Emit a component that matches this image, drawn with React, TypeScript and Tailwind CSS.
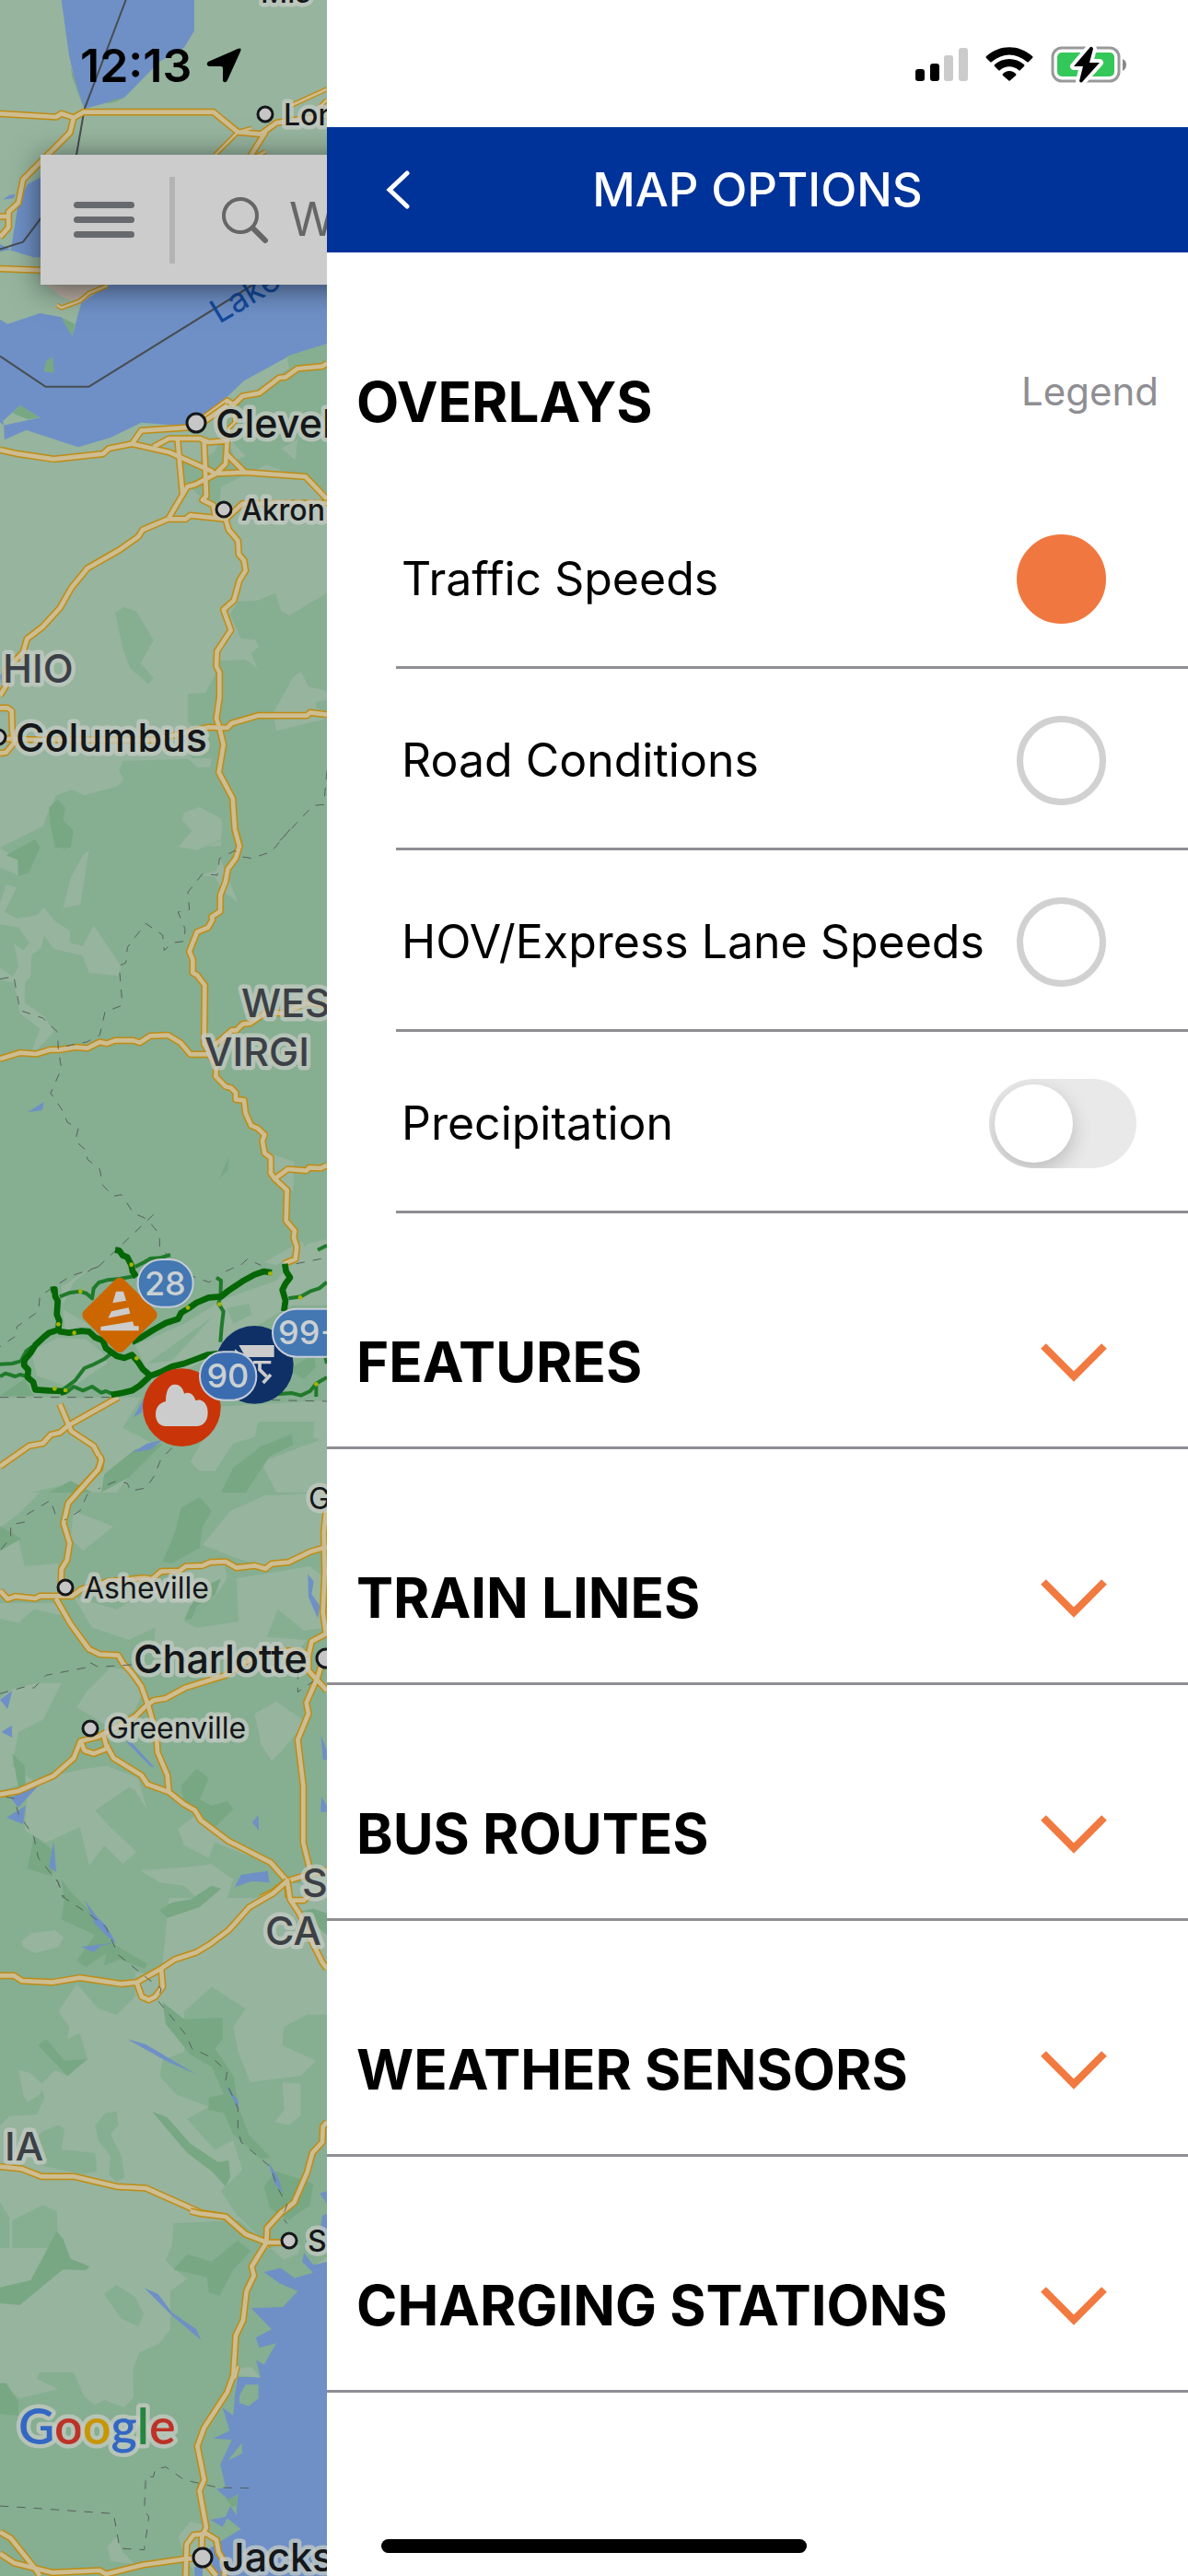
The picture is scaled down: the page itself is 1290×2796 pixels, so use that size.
import { useState } from 'react';

type Fill = 'light' | 'dark' | 'deep' | 'water' | 'sand';

interface Tile {
  y: number;
  fills: [Fill, string][];
  roads: string[];
  thinRoads?: string[];
  dashed?: string[];
  solid?: string[];
}

const FILL_COLORS: Record<Fill, string> = {
  light: '#96b49e',
  dark: '#86ae91',
  deep: '#77a783',
  water: '#6e90c6',
  sand: '#b9ada3',
};

// Path data is drawn at 3x, each tile is placed at its own y
const TILES: Tile[] = [
  {
    y: 0,
    fills: [
      ['water', 'M200 0L633 0L633 100L600 155L520 200L405 318L275 355L250 290L225 180Z'],
      ['deep', 'M230 215L275 355L255 300L235 250Z'],
      ['deep', 'M345 338L370 325L405 318L380 330Z'],
      ['water', 'M130 578L90 600L60 660L35 815L110 838L160 838L160 578Z'],
      ['water', 'M10 650L30 635L50 632L45 645Z'],
      ['water', 'M0 795L35 812L0 820Z'],
      ['water', 'M0 1040L25 1055L130 1020L200 1033L235 1095L265 985L350 930L500 900L1065 900L1065 1120L950 1155L795 1240L700 1330L640 1390L460 1376L360 1425L255 1456L85 1400L15 1432L12 1385L0 1375Z'],
      ['sand', 'M150 928L350 928L265 985L210 972Z'],
      ['deep', 'M200 1033L235 1095L243 1055Z'],
      ['light', 'M10 1370L65 1320L130 1360L12 1385Z'],
      ['deep', 'M40 1345L65 1320L130 1360L90 1365Z'],
      ['deep', 'M143 1210L150 1175L172 1162L176 1214Z'],
      ['dark', 'M1065 1120L990 1142L935 1160L942 1200L840 1265L740 1330L740 1440L1065 1440Z'],
    ],
    roads: [
      'M0 370L183 381L200 370L240 383L272 365L695 365L775 430L850 437L900 400L1065 375',
      'M240 383L228 432L75 585L60 660L28 690L28 740L0 772',
      'M0 705L28 705',
      'M0 875L140 880',
      'M865 430L815 510',
      'M640 1378L740 1305L760 1318L790 1290L845 1280L910 1230L930 1228L970 1200L1050 1193L1065 1183',
    ],
    thinRoads: [
      'M700 505L775 430L820 418',
      'M945 345L1065 290',
      'M1065 325L1040 350',
      'M350 930L290 955L260 980L200 1002L185 993',
      'M835 510L865 493',
      'M760 1340L765 1375L745 1395L750 1420',
    ],
    solid: [
      'M410 0L275 355L248 510',
      'M135 708L75 788L0 812',
      'M0 1160L148 1259L290 1259L860 905',
    ],
  },
  {
    y: 440,
    fills: [
      ['dark', 'M740 60L1065 60L1065 310L995 300L970 230L870 195L720 265L715 330L690 330L600 250L590 180L640 190L700 150Z'],
      ['light', 'M740 100L800 165L765 180Z'],
      ['light', 'M915 140L970 110L962 178Z'],
      ['light', 'M720 265L870 192L910 215L990 235L1065 305L1065 330L715 330Z'],
      ['dark', 'M750 680L785 760L830 762L843 785L818 808L840 858L800 828L710 832L700 880L670 935L612 940L612 1030L640 1060L600 1090L620 1140L640 1178L685 1178L670 1150L400 1158L388 1190L403 1217L385 1240L275 1270L235 1252L183 1270L155 1330L140 1370L0 1440L1065 1440L1065 612L942 684L915 668L897 612L840 635L775 638Z'],
      ['light', 'M612 1150L690 1150L685 1178L640 1178Z'],
      ['light', 'M955 885L980 865L1005 915L1065 930L1065 960L1030 965L1030 985L1065 1000L1065 1020L900 1060L890 1000Z'],
      ['light', 'M600 1325L650 1308L720 1345L725 1370L720 1415L640 1446L580 1438L625 1385L592 1350Z'],
      ['deep', 'M160 1310L188 1283L212 1310L205 1350L238 1385L230 1440L180 1440L165 1370Z'],
      ['dark', 'M375 675L403 657L443 670L500 765L458 840L500 888L483 907L423 855L400 790Z'],
      ['water', 'M0 880L8 870L5 910Z'],
    ],
    roads: [
      'M0 145L60 158L175 175L335 158L355 140L430 125L460 82L640 70L740 0',
      'M430 125L550 152L690 215L700 228',
      'M500 135L550 108L650 108L680 120L740 115L735 190L700 225L635 258L610 265L595 290L548 370L465 405L450 428L390 470L285 530L232 595L195 660L138 722L88 760L75 805L20 860L18 915L0 945',
      'M578 108L595 290',
      'M665 115L672 295L660 308L695 325L700 355L735 370',
      'M735 155L795 215',
      'M700 222L800 218L995 232L1065 305',
      'M548 370L605 370L620 358L735 370L790 320L1065 318',
      'M735 370L745 405L775 440L778 485L795 505L800 538L780 570L762 635L728 665L752 732L707 800L705 850L715 870L715 950L705 1020L715 1050L728 1105L713 1195L758 1280L765 1380L782 1440',
      'M0 1085L90 1088L500 1090L680 1048L740 1050L755 1035L840 1010L1000 1010L1010 1000L1065 1007',
      'M0 985L25 985L38 995L40 1060L45 1100L20 1130L0 1133',
    ],
    dashed: ['M1065 1190L1055 1300L1020 1303L905 1425'],
  },
  {
    y: 900,
    fills: [
      ['dark', 'M0 60H1065V1440H0Z'],
      ['light', 'M580 58L640 68L718 38L722 55Z'],
      ['light', 'M0 60L58 100L60 150L0 125Z'],
      ['light', 'M205 257L230 160L270 85L290 68L262 245Z'],
      ['light', 'M15 270L55 190L20 180L0 240L0 310L60 320L95 370L75 395L45 370L60 450L40 480L0 450L0 490L45 500L65 600L130 650L105 715L120 720L175 660L145 610L80 565L82 500L100 480L103 410L135 385L143 345L175 390L268 412L290 468L385 478L395 445L305 313L270 380L228 370L228 330L180 300L143 255L120 280L55 290Z'],
      ['deep', 'M20 85L115 33L130 60L95 140L60 153L58 100Z'],
      ['deep', 'M178 0L238 0L232 50L208 65L178 30Z'],
      ['light', 'M655 150L705 135L715 90L775 238L725 200L700 155Z'],
      ['water', 'M90 922L143 888L138 915Z'],
      ['light', 'M885 1058L960 1083L955 1180L900 1140Z'],
      ['deep', 'M745 1068L742 1110L715 1138Z'],
      ['light', 'M985 1340L995 1370L900 1420L860 1410Z'],
    ],
    roads: [
      'M0 748L65 728L118 732L165 718L195 718L245 710L285 713L325 693L348 698L375 688L435 688L455 695L490 673L548 671L588 695L620 733L680 733L705 770L703 805L735 838L752 842L768 858L768 880L795 883L800 925L818 965L838 973L862 995L855 1015L862 1055L882 1070L882 1120L895 1138L935 1175L932 1275L960 1308L957 1330L967 1360L962 1400L925 1415',
      'M765 0L780 55L768 95L742 130L735 170L718 215L717 268L690 285L692 295L678 320L642 335L617 398L628 425L628 468L642 475L667 508L665 700L690 740',
      'M680 715L715 690L755 655L770 655L790 635L815 632L870 595L920 600L995 567L1065 570',
      'M895 1138L938 1107L998 1112L1008 1102L1045 1104L1065 1095',
    ],
    dashed: [
      'M945 0L885 73L820 95L790 90L765 70L715 95L708 150L660 145L612 205L617 262L580 270L603 325L600 365L560 370L535 395L530 345L475 307L445 345L415 385L410 435L388 445L397 550L395 575L342 595L325 670L285 692L190 712',
      'M0 488L45 480L65 590L140 615L187 660L190 715L200 780L165 860L200 910L220 955L255 975L245 1015L280 1045L285 1075L325 1107L335 1160L370 1195L395 1190L435 1250L480 1270L520 1320L520 1360L545 1385',
      'M500 1255L400 1350L320 1425L285 1440',
    ],
  },
  {
    y: 1320,
    fills: [
      ['dark', 'M0 170H1065V900H0Z'],
      ['light', 'M100 440L190 395L280 400L340 450L350 480L230 560L120 520Z'],
      ['light', 'M440 420L600 350L730 270L900 210L1000 90L1065 75L1065 290L950 290L850 350L720 440L500 560L480 500Z'],
      ['light', 'M200 230L320 150L240 215L200 300L300 360L210 370Z'],
      ['light', 'M0 590L460 590L400 690L500 740L380 900L300 900L230 870L100 900L0 900Z'],
      ['light', 'M720 620L1065 600L1065 740L1020 720L1025 670L840 670L830 720L760 740L700 830L650 830L620 800Z'],
      ['light', 'M850 800L1065 720L1065 900L900 900Z'],
      ['dark', 'M480 480L690 330L560 470Z'],
      ['dark', 'M740 300L810 285L820 320L760 350Z'],
      ['deep', 'M720 900L760 820L850 750L950 710L955 745L880 780L800 900Z'],
      ['deep', 'M330 900L340 840L440 760L530 740L420 850Z'],
      ['deep', 'M160 900L230 862L300 900Z'],
      ['deep', 'M0 585L80 530L110 585Z'],
      ['deep', 'M940 500L1020 450L1030 490L990 530Z'],
      ['water', 'M435 655L470 590L462 640Z'],
      ['water', 'M430 770L480 740L530 728L490 760Z'],
    ],
    roads: [
      'M0 815L95 748L140 740L165 712L195 705L225 680L385 590',
      'M195 612L232 700L305 748L330 795L325 822L250 900',
    ],
    dashed: [
      'M0 590L360 590M720 595L1065 603',
      'M320 165L230 195L130 260L125 310L55 360L52 390L0 425',
      'M735 180L790 155L805 140L850 160M965 155L1065 135',
      'M610 190L680 215L710 200',
      'M560 755L525 790L500 850L475 885L425 895L415 870L380 862L320 888',
    ],
  },
  {
    y: 1580,
    fills: [
      ['dark', 'M0 120H1065V1440H0Z'],
      ['light', 'M0 120H130L60 190L0 235Z'],
      ['light', 'M240 180L370 230L270 310L230 270Z'],
      ['light', 'M660 290L750 180L860 130L1065 120L1065 300L1000 320L930 350L850 360L760 330Z'],
      ['light', 'M0 310L60 270L80 360L190 350L190 450L120 455L20 465L0 430Z'],
      ['light', 'M240 460L380 500L500 430L600 370L730 350L740 400L700 460L640 480L600 540L640 560L780 540L870 590L1000 600L970 640L500 640L505 560L420 600L300 560Z'],
      ['light', 'M0 480L190 480L200 520L110 500L60 545L0 530Z'],
      ['light', 'M770 400L1010 360L1060 400L1060 560L990 570L905 500L850 640L780 600Z'],
      ['light', 'M360 690L430 700L460 780L440 830L350 880L250 820L280 770Z'],
      ['light', 'M0 790L40 760L120 740L200 740L140 860L60 900L40 1010L110 1060L0 1090Z'],
      ['light', 'M270 1020L350 1010L450 1050L480 1155L440 1090L420 1080L310 1155L360 1210L445 1290L400 1330L340 1270L290 1335L260 1210L150 1260L80 1220L90 1080L180 1040Z'],
      ['light', 'M830 840L900 800L1000 870L960 910L910 970L885 995L850 940Z'],
      ['light', 'M580 1215L650 1160L740 1250L880 1310L800 1300L700 1260L680 1310L600 1270Z'],
      ['light', 'M455 1350L600 1340L690 1330L760 1380L740 1440L640 1440L600 1400L520 1390Z'],
      ['light', 'M880 1440L930 1390L1065 1400L1065 1440Z'],
      ['deep', 'M530 345L570 250L590 170L650 135L690 180L660 230L650 300L560 350Z'],
      ['deep', 'M0 230L70 270L0 310Z'],
      ['deep', 'M600 535L620 490L680 420L720 400L700 455L640 490L625 530Z'],
      ['deep', 'M590 1075L640 1020L680 1050L650 1120L690 1140L740 1125L760 1150L700 1210L640 1180L600 1130Z'],
      ['deep', 'M40 970L80 1010L85 1100L60 1080Z'],
      ['deep', 'M110 1240L180 1290L170 1370L90 1345Z'],
      ['water', 'M0 795L40 765L25 825Z'],
      ['water', 'M5 900L38 878L40 918Z'],
      ['water', 'M35 1115L60 1100L125 1075L60 1145Z'],
      ['water', 'M22 1178L83 1140L75 1200Z'],
      ['water', 'M175 1255L183 1355L160 1340Z'],
      ['water', 'M1003 385L1022 410L1015 450L1042 490L1035 530L1005 460Z'],
      ['water', 'M765 1405L785 1365L872 1352L878 1390L820 1385Z'],
      ['water', 'M822 1193L842 1170L843 1222Z'],
      ['water', 'M1045 910L1065 960V990H1052Z'],
      ['water', 'M1047 1110L1065 1140V1160H1045Z'],
      ['water', 'M410 930L430 935L503 1015L490 1012Z'],
    ],
    roads: [
      'M325 0L330 15L320 45L222 155L207 220L227 285L218 340L200 370L198 455',
      'M0 440L25 467L50 458L115 465L130 457L235 457L265 435L350 410L470 398L495 402L525 377L585 375L605 360L660 358L685 347L735 345L770 365L830 358L865 368L885 352L940 347L1010 313L1065 297',
      'M182 465L230 548L290 630L325 647L385 650L400 675L430 708L460 750L485 820L510 910L513 965L545 1040L550 1095',
      'M0 1103L60 1092L175 1042L240 985L262 930L320 915L440 850L470 820L500 797L540 790L605 755L735 715L850 640L960 635L1000 645',
      'M265 935L275 960L305 970L345 955L350 940',
      'M335 900L345 940L370 985L460 1040L480 1070L550 1095L600 1135L635 1155L655 1188L745 1255L882 1325L935 1385L1000 1365L1065 1350',
      'M1062 180L1055 250L1058 380L1052 510L1062 580L1015 605L1005 650L1005 700L1065 765',
      'M1060 640L1035 720L998 805L1005 840L970 925L988 1075L988 1260L1010 1350',
      'M850 1440L890 1420L935 1385L940 1440',
    ],
    dashed: [
      'M285 125L260 180L210 210',
      'M180 190L165 145L90 190L85 215L35 225L35 265L0 310',
      'M0 775L90 750L110 757L150 715L280 690L290 672L320 688L440 680L480 682',
      'M20 1112L45 1115L60 1165L110 1240L125 1310L190 1390L205 1440',
      'M970 700L970 770L1020 735',
    ],
  },
  {
    y: 2040,
    fills: [
      ['dark', 'M0 60L550 60L530 270L500 310L440 300L440 380L380 440L320 420L250 340L190 430L225 480L220 520L260 500L285 585L220 640L180 620L130 670L145 710L120 765L30 770L0 800Z'],
      ['dark', 'M600 430L690 350L800 420L760 480L775 560L815 660L980 640L1030 590L920 540L925 480L1000 440L1065 440L1065 1200L870 1190L770 1090L720 1015L790 945L760 850L700 880L610 780L680 740L575 700L520 640L530 590L600 560Z'],
      ['dark', 'M310 800L345 760L380 755L385 800L360 830L395 900L405 970L380 985L355 960L360 900L320 850Z'],
      ['dark', 'M190 800L210 810L200 880L310 890L315 950L270 960L130 930L100 860L140 820Z'],
      ['dark', 'M40 1110L140 1060L185 1080L190 1200L40 1200Z'],
      ['dark', 'M565 1120L780 1110L870 1190L870 1200L560 1200Z'],
      ['dark', 'M0 1050L30 1100L30 1200L0 1200Z'],
      ['light', 'M70 200L100 175L180 165L208 190L190 220L115 240L75 220Z'],
      ['light', 'M60 620L100 630L140 670L130 700L90 725L75 700Z'],
      ['light', 'M920 660L980 665L980 770L940 800L895 790L925 750Z'],
      ['deep', 'M520 100L560 75L620 65L690 20L720 30L650 90L545 125Z'],
      ['deep', 'M200 0L230 40L310 120L370 210L480 275L470 290L390 260L340 280L345 240L280 285L250 265L310 180L200 130L210 70Z'],
      ['deep', 'M530 400L600 455L725 450L725 520L700 550L760 640L780 750L810 830L880 905L850 910L760 830L730 760L680 750L680 710L730 700L690 610L620 570L540 470Z'],
      ['deep', 'M495 755L545 775L620 860L710 920L745 915L750 970L735 1000L690 950L610 890Z'],
      ['deep', 'M860 1000L900 950L1020 990L1010 1060L940 1110L880 1070Z'],
      ['deep', 'M125 540L150 520L210 590L285 585L220 640Z'],
      ['deep', 'M975 105L1020 95L1065 110L1065 180Z'],
      ['water', 'M275 65L310 115L345 150L380 210L355 190L310 145Z'],
      ['water', 'M265 220L380 205L325 217L305 237Z'],
      ['water', 'M415 520L475 537L638 634L540 590Z'],
      ['water', 'M735 670L775 720L778 750Z'],
      ['water', 'M875 920L905 970L922 1022L895 990Z'],
      ['water', 'M1042 1022L1065 1015V1055Z'],
      ['water', 'M1050 1095L1065 1088V1200L1045 1130Z'],
    ],
    roads: [
      'M0 313L45 313L72 330L170 335L260 320L395 340L445 335L525 290L570 260L640 237L685 210L745 165L812 90L890 45L935 5',
      'M445 335L462 382L485 392L505 382L530 350L525 290',
      'M935 0L945 65L975 110L1000 170L1050 270L1065 290',
      'M945 68L990 68L1020 40',
      'M0 935L70 942L135 967L240 967L380 1000L475 1005L655 1085L735 1098L800 1155L870 1182L930 1182',
      'M1065 790L1052 805L1050 855L1018 890L1000 955L958 1052L910 1090L870 1135L868 1200',
    ],
    dashed: [
      'M185 0L210 60L300 120L345 155L385 245L480 322L525 355L515 395L605 505L625 550L690 580L740 625L735 655L775 745L775 810L785 855L880 935L905 1005L935 1060L920 1100L935 1120',
    ],
  },
  {
    y: 2400,
    fills: [
      ['dark', 'M540 160L570 190L610 220L555 260L555 385L520 430L455 460L433 515L435 605L405 640L340 615L310 630L275 605L240 525L130 525L120 545L190 580L65 610L0 560L0 1188L1065 1188L1065 110L560 110Z'],
      ['deep', 'M185 65L205 90L230 155L293 180L280 192L205 190L65 305L0 300L0 248L100 225Z'],
      ['dark', 'M340 270L380 240L440 280L468 335L450 375L395 350Z'],
      ['deep', 'M565 190L610 140L690 165L775 95L817 130L760 190L715 275L680 265L675 215Z'],
      ['deep', 'M0 560L20 560L60 620L60 665L0 660Z'],
      ['light', 'M350 1090L380 1060L400 1110L440 1150L360 1140Z'],
      ['light', 'M580 1060L620 1010L660 1020L700 1060L730 1100L720 1188L640 1188L600 1120Z'],
      ['light', 'M880 120L930 110L980 110L970 140L925 158Z'],
      ['water', 'M1065 160L1020 175L990 135L985 165L1020 200L960 218L915 185L860 198L910 235L970 260L922 312L818 316L885 385L833 412L845 445L900 430L860 500L835 485L848 540L775 540L765 600L760 665L725 640L748 715L695 740L755 745L718 825L735 900L705 905L745 940L775 920L770 990L750 960L735 995L685 1005L725 1028L740 1000L785 1035L720 1075L680 1100L700 1188L1065 1188Z'],
      ['dark', 'M780 600L800 565L842 565V610L810 635L780 625Z'],
      ['light', 'M775 510L820 508L848 543L775 535Z'],
      ['dark', 'M742 812L788 755L788 790Z'],
      ['deep', 'M725 920L745 940L772 922V960L755 962Z'],
      ['light', 'M1025 175L1065 150V165Z'],
      ['water', 'M470 250L515 270L560 330L640 385L655 420L560 340Z'],
      ['water', 'M632 1160L660 1150V1188H635Z'],
    ],
    roads: [
      'M620 0L655 8L735 18L800 75L870 102L930 102',
      'M920 0L870 55L868 102L820 180L827 210L803 260L792 355L768 405L760 535L740 590L665 705L643 765L665 875L650 910L672 1030L658 1060L657 1100',
      'M0 1045L35 1065L115 1165L130 1188',
      'M0 1115L45 1145L170 1177L325 1170L345 1182L465 1152L600 1133L640 1130',
      'M605 1188L608 1085L630 1055L672 1050L705 1070L712 1110L735 1150L730 1188',
      'M670 1145L705 1188',
    ],
    thinRoads: ['M775 505L765 545'],
    dashed: [
      'M0 960L110 967L370 985L390 1098L470 1103L485 995L470 975L475 865L500 865L505 840L540 833L600 875L710 900L820 902',
    ],
  },
];

const HIGHWAY_SPEEDS = [
  'M375 110L388 112L400 128L415 134L428 160L432 180L445 198',
  'M165 240L178 238L180 262L188 275L185 320L193 340L190 370L160 380L145 392L115 420L100 445L80 468L78 485L92 500L90 525L108 540L115 565L160 568L205 570L208 582',
  'M190 375L225 380L265 374L290 376L310 395L335 405L345 430L380 455L405 462L430 452L450 475L465 498L490 520',
  'M362 582L400 575L430 568L455 552L490 520L530 505L560 490L600 480L640 465L675 452L710 448',
  'M430 410L460 395L500 370L540 348L580 335L590 315L615 300L640 282L680 265L720 262L745 242L790 212L830 190L860 180L885 184',
  'M928 155L932 180L945 200L930 220L920 240L930 275L925 310',
];

const STREET_SPEEDS = [
  'M440 165L470 150L490 138L520 136L555 126',
  'M195 262L225 250L260 245L282 252L300 268L305 235L322 216L350 208L390 204L440 195',
  'M0 482L40 480L68 472L85 440L105 425',
  'M0 522L18 512L50 522L65 516L90 522',
  'M205 565L245 535L275 495L300 485L340 465L365 445',
  'M215 575L240 555L270 568L300 555L330 575L345 570L365 578',
  'M705 200L720 210L718 262L712 285L728 310L722 360L718 410',
  'M940 268L980 262L1010 245L1040 235L1065 215',
  'M900 580L950 576L980 584L1010 570L1030 545L1065 525',
  'M1030 545V588',
  'M1035 110L1065 95',
  'M1060 460L1065 480',
];

const SLOW_SPOTS = [
  [428, 158], [612, 298], [880, 187], [190, 352], [178, 562], [213, 567],
  [242, 380], [445, 463], [715, 287], [978, 265], [1030, 547], [262, 245],
];

const CITY_DOTS = [
  [288, 124, 8], [213, 459, 10], [243, 553, 8], [-2, 800, 8], [71, 1723, 8],
  [98, 1876, 8], [354, 1800, 10], [314, 2432, 8], [220, 2776, 10],
];

const LABELS = [
  { text: 'Mis', x: 283, y: 3, className: 'fill-[#15171a] text-[32px] font-medium' },
  { text: 'Lon', x: 308, y: 136, className: 'fill-[#15171a] text-[32px] font-medium' },
  { text: 'Clevel', x: 234, y: 475, className: 'fill-[#15171a] text-[43px] font-medium' },
  { text: 'Akron', x: 262, y: 565, className: 'fill-[#15171a] text-[32px] font-medium' },
  { text: 'HIO', x: 3, y: 741, className: 'fill-[#3c4046] text-[43px] font-medium' },
  { text: 'Columbus', x: 17, y: 816, className: 'fill-[#15171a] text-[43px] font-medium' },
  { text: 'WES', x: 262, y: 1104, className: 'fill-[#3c4046] text-[43px] font-medium' },
  { text: 'VIRGI', x: 222, y: 1157, className: 'fill-[#3c4046] text-[43px] font-medium' },
  { text: 'G', x: 335, y: 1638, className: 'fill-[#15171a] text-[32px]' },
  { text: 'Asheville', x: 91, y: 1735, className: 'fill-[#15171a] text-[32px]' },
  { text: 'Charlotte', x: 145, y: 1816, className: 'fill-[#15171a] text-[43px] font-medium' },
  { text: 'Greenville', x: 116, y: 1887, className: 'fill-[#15171a] text-[32px]' },
  { text: 'S', x: 328, y: 2059, className: 'fill-[#3c4046] text-[43px] font-medium' },
  { text: 'CA', x: 288, y: 2111, className: 'fill-[#3c4046] text-[43px] font-medium' },
  { text: 'IA', x: 5, y: 2345, className: 'fill-[#3c4046] text-[43px] font-medium' },
  { text: 'S', x: 334, y: 2444, className: 'fill-[#15171a] text-[32px] font-medium' },
  { text: 'Jacks', x: 241, y: 2791, className: 'fill-[#15171a] text-[43px] font-medium' },
];

const OVERLAYS = ['Traffic Speeds', 'Road Conditions', 'HOV/Express Lane Speeds'];

const SECTIONS = ['FEATURES', 'TRAIN LINES', 'BUS ROUTES', 'WEATHER SENSORS', 'CHARGING STATIONS'];

function tileTransform(y: number) {
  return `translate(0 ${y}) scale(0.33333)`;
}

function MapMarkers() {
  return (
    <g transform={tileTransform(1320)}>
      <circle cx="829" cy="484" r="127" fill="#0e3067" />
      <path d="M778 420H893V459H800ZM765 433L800 459L765 450ZM825 471H883V481H825Z" fill="#ccc" />
      <path d="M846 480V500L868 522M857 543L882 516" fill="none" stroke="#ccc" strokeWidth="11" />
      <circle cx="592" cy="623" r="127" fill="#c93508" />
      <path
        d="M540 684C520 684 507 668 507 645C507 622 520 608 540 603C540 570 550 548 570 548C587 548 597 562 600 578C615 570 632 580 637 600C660 592 677 612 677 640C677 668 662 684 640 684Z"
        fill="#ccc"
      />
      <rect x="298" y="230" width="184" height="184" rx="20" fill="#cc6600" transform="rotate(45 390 322)" />
      <path
        d="M378 245H402L411 275L367 283ZM363 310L419 298L424 317L352 332ZM328 360L432 343L437 358H452V373H328Z"
        fill="#ccc"
      />
      <g fill="#4378b3" stroke="#c6ccd8" strokeWidth="6">
        <rect x="449" y="141" width="180" height="155" rx="77" />
        <rect x="888" y="302" width="260" height="156" rx="78" />
        <rect x="651" y="442" width="184" height="157" rx="78" fill="#3b6cb0" />
      </g>
      <g className="fill-[#cbd0d2] text-[108px] font-medium">
        <text x="538" y="258" textAnchor="middle">28</text>
        <text x="742" y="559" textAnchor="middle">90</text>
        <text x="906" y="418">99+</text>
      </g>
    </g>
  );
}

function MapView() {
  return (
    <svg
      viewBox="0 0 355 2796"
      preserveAspectRatio="xMinYMin slice"
      className="absolute inset-0 h-full w-full bg-[#96b49e]"
      role="img"
      aria-label="Map"
    >
      {TILES.map((tile) => (
        <g key={tile.y} transform={tileTransform(tile.y)}>
          {tile.fills.map(([kind, d], i) => (
            <path key={i} d={d} fill={FILL_COLORS[kind]} />
          ))}
        </g>
      ))}

      {TILES.map((tile) => (
        <g key={tile.y} transform={tileTransform(tile.y)} fill="none" strokeLinejoin="round">
          <g stroke="#484d50" strokeWidth="6">
            {tile.solid?.map((d) => <path key={d} d={d} />)}
          </g>
          <g stroke="#bf8c12" strokeWidth="23">
            {tile.roads.map((d) => <path key={d} d={d} />)}
          </g>
          <g stroke="#bf8c12" strokeWidth="16">
            {tile.thinRoads?.map((d) => <path key={d} d={d} />)}
          </g>
          <g stroke="#cdbd92" strokeWidth="14">
            {tile.roads.map((d) => <path key={d} d={d} />)}
          </g>
          <g stroke="#cdbd92" strokeWidth="8">
            {tile.thinRoads?.map((d) => <path key={d} d={d} />)}
          </g>
          <g stroke="#55605a" strokeWidth="3" strokeDasharray="28 27">
            {tile.dashed?.map((d) => <path key={d} d={d} />)}
          </g>
        </g>
      ))}

      <g transform={tileTransform(1320)} fill="none" strokeLinejoin="round">
        <g stroke="#1f7a2a" strokeWidth="12">
          {STREET_SPEEDS.map((d) => <path key={d} d={d} />)}
        </g>
        <g stroke="#046604" strokeWidth="20">
          {HIGHWAY_SPEEDS.map((d) => <path key={d} d={d} />)}
        </g>
        {SLOW_SPOTS.map(([x, y]) => (
          <circle key={`${x}-${y}`} cx={x} cy={y} r="7" fill="#a5b400" />
        ))}
      </g>

      <g stroke="#c5cbc4" strokeOpacity="0.75" strokeWidth="9" strokeLinejoin="round" paintOrder="stroke">
        {LABELS.map((label) => (
          <text key={`${label.text}-${label.y}`} x={label.x} y={label.y} className={label.className}>
            {label.text}
          </text>
        ))}
        <text x="20" y="2653" className="font-['Lato','Open_Sans',sans-serif] text-[54px] font-semibold">
          <tspan fill="#3367c4">G</tspan>
          <tspan fill="#bd3227">o</tspan>
          <tspan fill="#c79604">o</tspan>
          <tspan fill="#3367c4">g</tspan>
          <tspan fill="#25863f">l</tspan>
          <tspan fill="#bd3227">e</tspan>
        </text>
      </g>
      <text transform="translate(238 352) rotate(-31)" className="fill-[#134a9c] text-[36px]">Lake E</text>

      {CITY_DOTS.map(([x, y, r]) => (
        <circle key={`${x}-${y}`} cx={x} cy={y} r={r} fill="#c6c6c6" stroke="#15171a" strokeWidth="3" />
      ))}

      <MapMarkers />
    </svg>
  );
}

function SearchBar() {
  return (
    <div className="absolute top-[168px] right-0 left-11 flex h-[141px] items-center overflow-hidden bg-[#cccccc]">
      <button type="button" aria-label="Menu" className="ml-9 flex w-[66px] shrink-0 flex-col gap-[9px]">
        <span className="h-[7px] rounded-full bg-[#666a6e]" />
        <span className="h-[7px] rounded-full bg-[#666a6e]" />
        <span className="h-[7px] rounded-full bg-[#666a6e]" />
      </button>
      <div className="ml-[38px] h-[94px] w-[6px] shrink-0 bg-[#b3b3b3]" />
      <svg viewBox="0 0 52 52" className="ml-[50px] h-[52px] w-[52px] shrink-0" fill="none" stroke="#666666">
        <circle cx="21" cy="21" r="18" strokeWidth="4" />
        <path d="M35 35L48 48" strokeWidth="6" strokeLinecap="round" />
      </svg>
      <input
        type="text"
        aria-label="Search"
        placeholder="W"
        className="ml-[22px] min-w-0 flex-1 bg-transparent text-[51px] outline-none placeholder:text-[#666666]"
      />
    </div>
  );
}

function StatusIcons() {
  return (
    <svg viewBox="0 0 230 40" className="h-10 w-[230px]" role="img" aria-label="Signal, Wi-Fi and battery">
      <rect x="0" y="25" width="10" height="13" rx="3" />
      <rect x="16" y="19" width="10" height="19" rx="3" />
      <rect x="31" y="10" width="10" height="28" rx="3" fill="#cbcbcb" />
      <rect x="47" y="2" width="10" height="36" rx="3" fill="#cbcbcb" />
      <path d="M77 11C92 -2 112 -2 127 11Q128 12 127 13L123 17Q122 18 121 17C109 7 95 7 83 17Q82 18 81 17L77 13Q76 12 77 11Z" />
      <path d="M86 20C95 12 109 12 118 20Q119 21 118 22L114 26Q113 27 112 26C106 21 98 21 92 26Q91 27 90 26L86 22Q85 21 86 20Z" />
      <path d="M95 30C99 26 105 26 109 30Q110 31 109 32L102 38L95 32Q94 31 95 30Z" />
      <rect x="149" y="2" width="72" height="36" rx="10" fill="none" stroke="#999" strokeWidth="3" />
      <path d="M225 14Q229 16 229 20Q229 25 225 27Z" fill="#888" />
      <rect x="154" y="7" width="62" height="26" rx="5" fill="#34c759" />
      <path
        d="M190 1L172 22H182L178 38Q180 41 182 38L200 18H189L193 3Q192 0 190 1Z"
        stroke="#fff"
        strokeWidth="8"
        strokeLinejoin="round"
        paintOrder="stroke"
      />
    </svg>
  );
}

export default function App() {
  const [overlay, setOverlay] = useState('Traffic Speeds');
  const [precipitation, setPrecipitation] = useState(false);

  return (
    <div className="relative flex min-h-screen overflow-hidden bg-white font-['Inter','Liberation_Sans',sans-serif] text-black">
      <aside className="relative w-[355px] shrink-0 overflow-hidden">
        <MapView />
        <div className="absolute top-[168px] -right-10 left-11 h-[141px] shadow-[0_4px_30px_rgba(0,0,0,0.55)]" />
        <SearchBar />
        <div className="absolute top-[41px] left-[87px] flex items-center gap-4">
          <span className="text-[50px] leading-[60px] font-semibold">12:13</span>
          <svg viewBox="0 0 38 38" className="h-[38px] w-[38px]">
            <path d="M34 1Q39 -1 37 4L23 35Q21 39 18 36V22Q18 20 16 20H3Q-1 18 2 15Z" />
          </svg>
        </div>
      </aside>

      <main className="flex min-w-0 flex-1 flex-col bg-white">
        <div className="flex h-[138px] items-center justify-end pt-[2px] pr-[66px]">
          <StatusIcons />
        </div>

        <header className="relative flex h-[136px] items-center justify-center bg-[#003399] text-white">
          <button type="button" aria-label="Back" className="absolute left-14 p-2">
            <svg viewBox="0 0 26 42" className="h-[42px] w-[26px]" fill="none" stroke="currentColor" strokeWidth="5" strokeLinecap="round">
              <path d="M23 3L4 21L23 39" />
            </svg>
          </button>
          <h1 className="text-[51px] leading-[60px] font-medium">MAP OPTIONS</h1>
        </header>

        <section>
          <div className="flex h-[255px] items-start justify-between pt-[126px] pr-8 pl-8">
            <h2 className="text-[60px] leading-[72px] font-bold">OVERLAYS</h2>
            <a href="#legend" className="text-[42px] leading-[50px] text-[#8e8e93]">Legend</a>
          </div>

          <div className="ml-[75px]">
            {OVERLAYS.map((name) => (
              <label
                key={name}
                className="flex h-[197px] items-center justify-between border-b-[3px] border-[#8e8e93] pt-1 pr-14 pl-[6px]"
              >
                <span className="text-[50px] leading-[60px] whitespace-nowrap">{name}</span>
                <span className="flex w-[164px] shrink-0 justify-center">
                  <input
                    type="radio"
                    name="overlay"
                    value={name}
                    checked={overlay === name}
                    onChange={() => setOverlay(name)}
                    className="h-[97px] w-[97px] appearance-none rounded-full border-[7px] border-[#d1d1d1] checked:border-[#f07840] checked:bg-[#f07840]"
                  />
                </span>
              </label>
            ))}
            <label className="flex h-[197px] items-center justify-between border-b-[3px] border-[#8e8e93] pt-1 pr-14 pl-[6px]">
              <span className="text-[50px] leading-[60px]">Precipitation</span>
              <input
                type="checkbox"
                checked={precipitation}
                onChange={(e) => setPrecipitation(e.target.checked)}
                className="flex h-[97px] w-40 shrink-0 appearance-none items-center overflow-hidden rounded-full bg-[#e9e9ea] px-[6px] before:h-[85px] before:w-[85px] before:rounded-full before:bg-white before:shadow-[0_8px_22px_rgba(0,0,0,0.2)] checked:justify-end checked:bg-[#f07840]"
              />
            </label>
          </div>
        </section>

        {SECTIONS.map((title) => (
          <button
            key={title}
            type="button"
            className="flex h-64 w-full items-end justify-between border-b-[3px] border-[#8e8e93] pr-[88px] pb-14 pl-8 text-left"
          >
            <h2 className="text-[60px] leading-[72px] font-bold whitespace-nowrap">{title}</h2>
            <svg viewBox="0 0 72 72" className="h-[72px] w-[72px] shrink-0" fill="none" stroke="#f27940" strokeWidth="8">
              <path d="M3 19L36 52L69 19" />
            </svg>
          </button>
        ))}
      </main>

      <div className="absolute bottom-[25px] left-1/2 h-[15px] w-[462px] -translate-x-1/2 rounded-full bg-black" />
    </div>
  );
}
